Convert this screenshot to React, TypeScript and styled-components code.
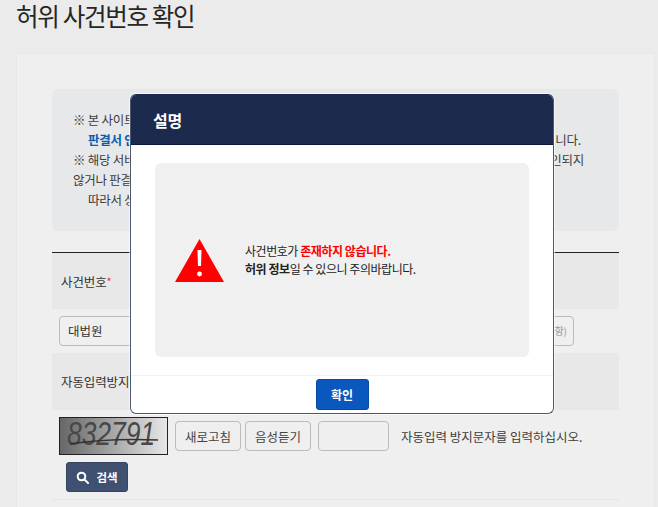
import React from "react";
import styled, { createGlobalStyle } from "styled-components";

const Global = createGlobalStyle`
  html, body { margin: 0; padding: 0; background: #ebebeb; }
  * { box-sizing: border-box; }
  body { font-family: "Noto Sans CJK KR", "Noto Sans", sans-serif; color: #333; }
`;
const Page = styled.div`
  position: relative; width: 658px; height: 507px; overflow: hidden;
  background: #ebebeb; padding: 0 3px 0 16px;
`;
const Title = styled.h1`
  margin: 0; height: 53px; font-size: 24.5px; line-height: 31px; font-weight: 400;
  letter-spacing: -1.3px; color: #262626;
`;
const Card = styled.div`
  height: 470px; background: #efefef; border: 1px solid #e8e8e8; padding: 35px 35px 0;
`;
const Notice = styled.div`
  height: 142px; background: #e7e8ea; border-radius: 6px; padding: 21px 35px 0 21px;
  font-size: 12.5px; line-height: 20px; color: #3c3c3c; letter-spacing: -0.25px;
`;
const NoticeLine = styled.div<{ $indent?: boolean; $inset?: number }>`
  display: flex; justify-content: space-between; white-space: nowrap; overflow: hidden;
  padding-left: ${(p) => (p.$indent ? "15px" : "0")};
  padding-right: ${(p) => p.$inset ?? 0}px;
`;
const Link = styled.b`color: #0b5cad;`;
const Table = styled.div`margin-top: 21px; border-top: 1px solid #222;`;
const HeadRow = styled.div<{ $h: number }>`
  height: ${(p) => p.$h}px; background: #e8e8e8; display: flex; align-items: center; padding-left: 9px;
  font-size: 12.5px; color: #333; letter-spacing: -0.1px;
`;
const Star = styled.span`color: #e33; font-size: 11px;`;
const CaseRow = styled.div`
  height: 44px; display: flex; align-items: center; gap: 8px; padding: 0 45px 1px 7px;
`;
const SelectBox = styled.div`
  width: 130px; height: 30px; border: 1px solid #bbb; border-radius: 4px; background: #efefef;
  display: flex; align-items: center; padding-left: 8px; font-size: 12.5px; color: #333;
`;
const Field = styled.div`
  flex: 1; height: 30px; border: 1px solid #bbb; border-radius: 4px; background: #efefef;
  display: flex; align-items: center; justify-content: flex-end; padding-right: 6px;
  font-size: 10px; color: #999;
`;
const CaptchaRow = styled.div`
  height: 52px; display: flex; align-items: center; padding: 0 0 0 7px; font-size: 12.5px; color: #444;
`;
const Captcha = styled.svg`display: block; width: 109px; height: 38px; margin-right: 7px;`;
const Outline = styled.div<{ $w: number; $ml?: number }>`
  width: ${(p) => p.$w}px; height: 30px; margin-left: ${(p) => p.$ml ?? 0}px; border: 1px solid #bbb; border-radius: 4px;
  background: #efefef; display: flex; align-items: center; justify-content: center;
  font-size: 12.5px; color: #444;
`;
const Hint = styled.span`margin-left: 12px; font-size: 12.5px; color: #3c3c3c;`;
const Search = styled.div`
  width: 62px; height: 30px; margin: 0 0 0 14px; background: #3f5070; border: 1px solid #35455f; border-radius: 3px;
  display: flex; align-items: center; justify-content: center; gap: 7px; color: #fff; font-size: 11.5px; font-weight: 700;
`;
const Rule = styled.div`height: 1px; background: #e6e6e6; margin-top: 7px;`;

const Modal = styled.div`
  position: absolute; left: 130px; top: 94px; width: 424px; height: 320px; background: #fff;
  border: 1px solid #4d566e; border-top-color: #1c2a4e; border-radius: 6px; overflow: hidden;
  box-shadow: 0 0 0 1px rgba(255,255,255,.6);
  display: flex; flex-direction: column;
`;
const ModalHead = styled.div`
  height: 50px; flex: none; background: #1c2a4e; border-bottom: 1px solid #0b1638; padding-left: 22px;
  display: flex; align-items: center; color: #fff; font-size: 16px; font-weight: 700; letter-spacing: -0.3px;
`;
const ModalBody = styled.div`flex: 1; padding: 18px 24px;`;
const Message = styled.div`
  height: 194px; background: #f0f0f0; border-radius: 6px; display: flex; align-items: center;
  padding-left: 20px; gap: 21px;
`;
const MessageText = styled.div`font-size: 12px; line-height: 18px; color: #222; letter-spacing: -0.45px;`;
const Danger = styled.b`color: #f00;`;
const ModalFoot = styled.div`
  height: 39px; flex: none; border-top: 1px solid #f0f0f0; display: flex; justify-content: center; padding-top: 3px;
`;
const Confirm = styled.div`
  width: 53px; height: 31px; background: #0a57bd; border-radius: 3px; border: 1px solid #084a9f; color: #fff; font-size: 12px; font-weight: 700;
  display: flex; align-items: center; justify-content: center;
`;

export default function App() {
  return (
    <Page>
      <Global />
      <Title>허위 사건번호 확인</Title>
      <Card>
        <Notice>
          <NoticeLine><span>※ 본 사이트는 판결서의 진위 여부를 확인하는 서비스입니다.</span></NoticeLine>
          <NoticeLine $indent $inset={3}><Link>판결서 인터넷 열람 사이트</Link><span>니다.</span></NoticeLine>
          <NoticeLine><span>※ 해당 서비스에서 사건번호가 확인되지 않는 경우</span><span>인되지</span></NoticeLine>
          <NoticeLine><span>않거나 판결서가 존재하지 않을 수 있습니다.</span></NoticeLine>
          <NoticeLine $indent><span>따라서 상세 내용을 확인하시기 바랍니다.</span></NoticeLine>
        </Notice>
        <Table>
          <HeadRow $h={56}>사건번호<Star>*</Star></HeadRow>
          <CaseRow>
            <SelectBox>대법원</SelectBox>
            <Field>(필수사항)</Field>
          </CaseRow>
          <HeadRow $h={57}>자동입력방지문자</HeadRow>
          <CaptchaRow>
            <Captcha viewBox="0 0 109 38">
              <defs>
                <linearGradient id="cap" x1="0" x2="1" y1="0" y2="0">
                  <stop offset="0" stopColor="#666" />
                  <stop offset="1" stopColor="#e8e8e8" />
                </linearGradient>
              </defs>
              <rect x=".5" y=".5" width="108" height="37" fill="url(#cap)" stroke="#222" />
              <text transform="translate(8 28) scale(.8 1)" fontFamily="Liberation Sans" fontStyle="italic" fontSize="33" fill="#484848">832791</text>
              <path d="M11 27 Q50 21 99 23" stroke="#333" strokeWidth="1.4" fill="none" />
            </Captcha>
            <Outline $w={66}>새로고침</Outline>
            <Outline $w={66} $ml={4}>음성듣기</Outline>
            <Outline $w={71} $ml={7} />
            <Hint>자동입력 방지문자를 입력하십시오.</Hint>
          </CaptchaRow>
          <Search>
            <svg width="13" height="13" viewBox="0 0 13 13" fill="none" stroke="#fff" strokeWidth="2">
              <circle cx="5.5" cy="5.5" r="3.8" />
              <path d="M8.5 8.5 L12 12" strokeLinecap="round" />
            </svg>
            검색
          </Search>
          <Rule />
        </Table>
      </Card>
      <Modal>
        <ModalHead>설명</ModalHead>
        <ModalBody>
          <Message>
            <svg width="49" height="43" viewBox="0 0 49 43">
              <path d="M24.5 0 L49 43 L0 43 Z" fill="#f00" />
              <path d="M22.5 11 H26.5 L26 27 H23 Z" fill="#fff" />
              <circle cx="24.5" cy="35" r="2.4" fill="#fff" />
            </svg>
            <MessageText>
              사건번호가 <Danger>존재하지 않습니다.</Danger>
              <br />
              <b>허위 정보</b>일 수 있으니 주의바랍니다.
            </MessageText>
          </Message>
        </ModalBody>
        <ModalFoot><Confirm>확인</Confirm></ModalFoot>
      </Modal>
    </Page>
  );
}
